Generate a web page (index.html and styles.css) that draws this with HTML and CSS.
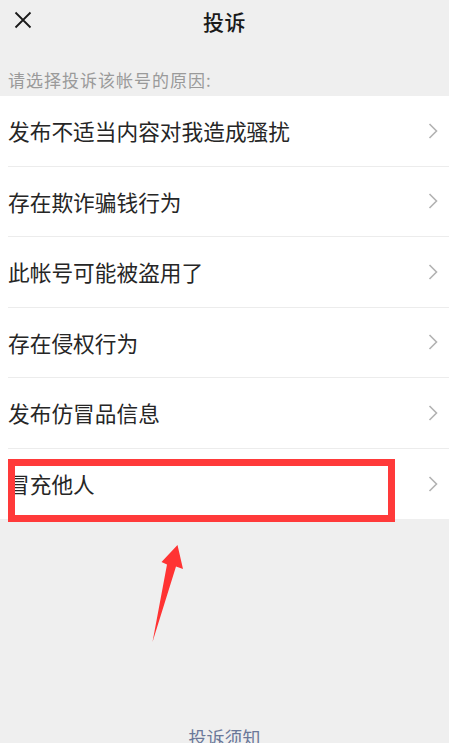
FILE: index.html
```html
<!DOCTYPE html>
<html lang="zh-CN">
<head>
<meta charset="utf-8">
<title>投诉</title>
<link rel="stylesheet" href="styles.css">
</head>
<body>
<div class="page">
  <header class="topbar">
    <span class="close">
      <svg width="18" height="18" viewBox="0 0 18 18"><path d="M1.5 1.5 L16.5 16.5 M16.5 1.5 L1.5 16.5" stroke="#1a1a1a" stroke-width="1.8" fill="none"/></svg>
    </span>
    <h1 class="title">投诉</h1>
  </header>
  <p class="hint">请选择投诉该帐号的原因:</p>
  <ul class="list">
    <li class="row"><span>发布不适当内容对我造成骚扰</span><svg class="chev" width="10" height="16" viewBox="0 0 10 16"><path d="M1.5 1 L8.5 8 L1.5 15" stroke="#b2b2b2" stroke-width="1.6" fill="none"/></svg></li>
    <li class="row"><span>存在欺诈骗钱行为</span><svg class="chev" width="10" height="16" viewBox="0 0 10 16"><path d="M1.5 1 L8.5 8 L1.5 15" stroke="#b2b2b2" stroke-width="1.6" fill="none"/></svg></li>
    <li class="row"><span>此帐号可能被盗用了</span><svg class="chev" width="10" height="16" viewBox="0 0 10 16"><path d="M1.5 1 L8.5 8 L1.5 15" stroke="#b2b2b2" stroke-width="1.6" fill="none"/></svg></li>
    <li class="row"><span>存在侵权行为</span><svg class="chev" width="10" height="16" viewBox="0 0 10 16"><path d="M1.5 1 L8.5 8 L1.5 15" stroke="#b2b2b2" stroke-width="1.6" fill="none"/></svg></li>
    <li class="row"><span>发布仿冒品信息</span><svg class="chev" width="10" height="16" viewBox="0 0 10 16"><path d="M1.5 1 L8.5 8 L1.5 15" stroke="#b2b2b2" stroke-width="1.6" fill="none"/></svg></li>
    <li class="row"><span>冒充他人</span><svg class="chev" width="10" height="16" viewBox="0 0 10 16"><path d="M1.5 1 L8.5 8 L1.5 15" stroke="#b2b2b2" stroke-width="1.6" fill="none"/></svg></li>
  </ul>
  <a class="notice">投诉须知</a>

  <div class="mark-box"></div>
  <svg class="mark-arrow" width="449" height="743" viewBox="0 0 449 743">
    <polygon points="177.5,545 183,569 176,566.5 152.5,642 167,564.5 161.5,562" fill="#ff3333"/>
  </svg>
</div>
</body>
</html>
```

FILE: styles.css
```css
html, body {
  margin: 0;
  padding: 0;
  background: #efefef;
}
body {
  font-family: "Noto Sans CJK SC", "Noto Sans", sans-serif;
  overflow: hidden;
}
.page {
  position: relative;
  width: 449px;
  height: 743px;
  overflow: hidden;
}
.topbar {
  position: relative;
  height: 42px;
  display: flex;
  align-items: center;
  justify-content: center;
}
.close {
  position: absolute;
  left: 14px;
  top: 11px;
  width: 18px;
  height: 18px;
  display: flex;
}
.title {
  margin: 0;
  font-size: 21px;
  font-weight: 500;
  color: #1a1a1a;
  line-height: 40px;
  letter-spacing: 0.5px;
}
.hint {
  margin: 0;
  padding: 28px 0 6px 8px;
  font-size: 17px;
  line-height: 20px;
  letter-spacing: 1px;
  color: #9a9a9a;
}
.list {
  list-style: none;
  margin: 0;
  padding: 0 0 0 8px;
  background: #fff;
}
.row {
  height: 70.5px;
  box-sizing: border-box;
  display: flex;
  align-items: center;
  justify-content: space-between;
  padding-right: 11px;
  border-bottom: 1px solid #ececec;
  font-size: 21.7px;
  color: #262626;
}
.row:last-child {
  border-bottom: none;
}
.chev {
  display: block;
}
.notice {
  display: block;
  margin-top: 206px;
  text-align: center;
  font-size: 18px;
  line-height: 24px;
  color: #6a7899;
}
.mark-box {
  position: absolute;
  left: 8px;
  top: 459px;
  width: 387px;
  height: 63px;
  box-sizing: border-box;
  border: 7px solid #ff3a3a;
}
.mark-arrow {
  position: absolute;
  left: 0;
  top: 0;
  pointer-events: none;
}
```
